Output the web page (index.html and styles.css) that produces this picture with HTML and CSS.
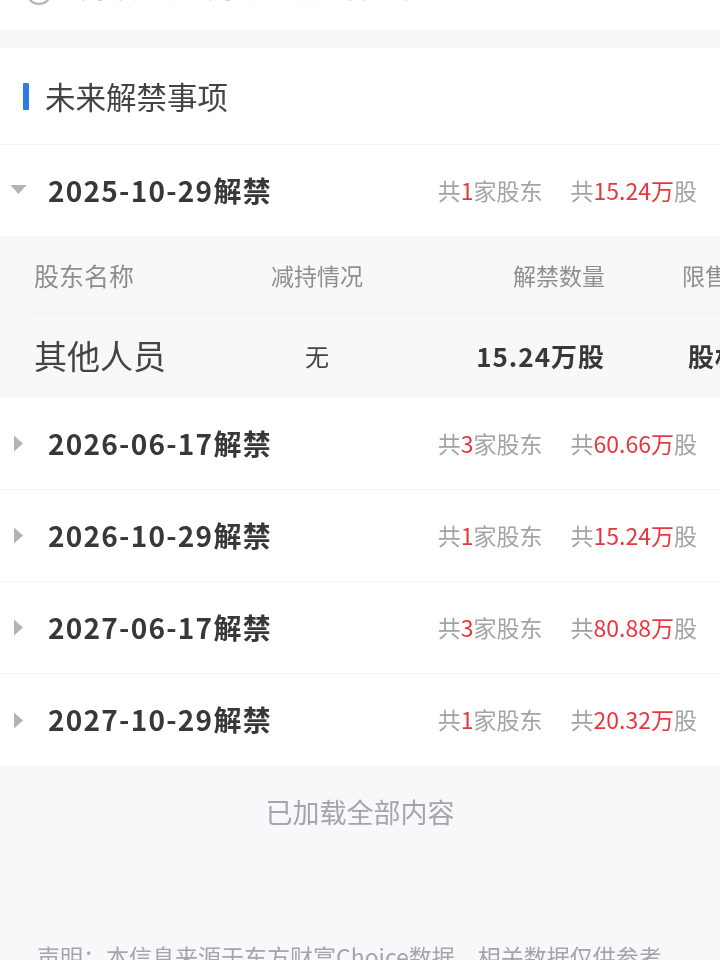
FILE: index.html
```html
<!DOCTYPE html>
<html lang="zh-CN">
<head>
    <meta charset="UTF-8">
    <meta name="viewport" content="width=device-width, initial-scale=1.0">
    <title>未来解禁事项</title>
    <link rel="stylesheet" href="styles.css">
</head>
<body>
    <div class="page">
        <div class="top-note">
            <span class="info-icon"></span>
            <span class="top-note-text">解禁日期及解禁数量以公告为准</span>
        </div>

        <section class="unlock">
            <h2 class="section-title">未来解禁事项</h2>

            <div class="unlock-row">
                <svg class="caret-down" viewBox="0 0 18 10"><path d="M0 0H18L9 10Z"/></svg>
                <span class="unlock-date">2025-10-29解禁</span>
                <span class="unlock-meta">共<em>1</em>家股东</span>
                <span class="unlock-meta">共<em>15.24万</em>股</span>
            </div>
            <div class="holders">
                <div class="holders-head">
                    <span class="col-name">股东名称</span>
                    <span class="col-reduce">减持情况</span>
                    <span class="col-amount">解禁数量</span>
                    <span class="col-type">限售股类型</span>
                </div>
                <div class="holders-item">
                    <span class="col-name">其他人员</span>
                    <span class="col-reduce">无</span>
                    <span class="col-amount">15.24万股</span>
                    <span class="col-type">股权激励限售</span>
                </div>
            </div>

            <div class="unlock-row">
                <svg class="caret-right" viewBox="0 0 10 18"><path d="M0 0L10 9L0 18Z"/></svg>
                <span class="unlock-date">2026-06-17解禁</span>
                <span class="unlock-meta">共<em>3</em>家股东</span>
                <span class="unlock-meta">共<em>60.66万</em>股</span>
            </div>
            <div class="unlock-row">
                <svg class="caret-right" viewBox="0 0 10 18"><path d="M0 0L10 9L0 18Z"/></svg>
                <span class="unlock-date">2026-10-29解禁</span>
                <span class="unlock-meta">共<em>1</em>家股东</span>
                <span class="unlock-meta">共<em>15.24万</em>股</span>
            </div>
            <div class="unlock-row">
                <svg class="caret-right" viewBox="0 0 10 18"><path d="M0 0L10 9L0 18Z"/></svg>
                <span class="unlock-date">2027-06-17解禁</span>
                <span class="unlock-meta">共<em>3</em>家股东</span>
                <span class="unlock-meta">共<em>80.88万</em>股</span>
            </div>
            <div class="unlock-row">
                <svg class="caret-right" viewBox="0 0 10 18"><path d="M0 0L10 9L0 18Z"/></svg>
                <span class="unlock-date">2027-10-29解禁</span>
                <span class="unlock-meta">共<em>1</em>家股东</span>
                <span class="unlock-meta">共<em>20.32万</em>股</span>
            </div>
        </section>

        <p class="load-end">已加载全部内容</p>
        <p class="disclaimer">声明：本信息来源于东方财富Choice数据，相关数据仅供参考</p>
    </div>
</body>
</html>
```

FILE: styles.css
```css
* {
    margin: 0;
    padding: 0;
    box-sizing: border-box;
}

html, body {
    height: 960px;
    overflow: hidden;
}

body {
    background-color: #f7f8fa;
    color: #333;
    font-family: "Noto Sans CJK SC", "Noto Sans", sans-serif;
}

/* the source picture is a soft, upscaled capture */
.page {
    height: 960px;
    overflow: hidden;
    filter: blur(0.45px);
}

.top-note {
    height: 30px;
    background-color: #fff;
    padding-left: 26px;
    display: flex;
    align-items: flex-end;
    gap: 12px;
    overflow: hidden;
    color: #c4c4c4;
    font-size: 25.5px;
    line-height: 34px;
}

.top-note-text {
    flex: none;
    margin-bottom: 26px;
}

.info-icon {
    flex: none;
    width: 26px;
    height: 26px;
    margin-bottom: 25px;
    border: 2px solid #b5b5b5;
    border-radius: 50%;
}

.unlock {
    margin-top: 18px;
    background-color: #fff;
}

.section-title {
    height: 97px;
    padding-left: 23px;
    display: flex;
    align-items: center;
    gap: 16px;
    border-bottom: 1px solid #f3f4f6;
    color: #444;
    font-size: 30.5px;
    font-weight: 400;
}

.section-title::before {
    content: "";
    width: 6px;
    height: 27px;
    border-radius: 1px;
    background-color: #2f7be5;
}

.unlock-row {
    height: 92px;
    padding: 0 23px 2px 10px;
    display: flex;
    align-items: center;
    color: #a3a3a3;
    font-size: 23px;
    border-bottom: 1px solid #f3f4f6;
}

.unlock-row:last-child {
    border-bottom: none;
}

.unlock-row em {
    font-style: normal;
    color: #e8363f;
}

.unlock-date {
    margin-right: auto;
    color: #383838;
    font-size: 28px;
    font-weight: 700;
    letter-spacing: 1.25px;
}

.unlock-meta + .unlock-meta {
    margin-left: 28px;
}

.caret-down {
    flex: none;
    width: 17px;
    height: 9px;
    margin-right: 21px;
    fill: #b3b3b3;
}

.caret-right {
    flex: none;
    width: 9px;
    height: 17px;
    margin: 2px 25px 0 4px;
    fill: #b3b3b3;
}

.holders {
    padding-left: 32px;
    background-color: #f7f8fa;
    overflow: hidden;
}

.holders-head,
.holders-item {
    display: grid;
    grid-template-columns: 192px 186px 195px 1fr;
    align-items: center;
    white-space: nowrap;
}

.holders-head {
    height: 77px;
    border-bottom: 1px solid #f0f1f3;
    color: #8e8e8e;
    font-size: 23px;
}

.holders-head .col-name {
    padding-left: 2px;
    font-size: 25px;
}

.holders-item {
    height: 84px;
    padding-bottom: 2px;
    color: #444;
}

.holders-item .col-name {
    padding-left: 2px;
    font-size: 33px;
}

.holders-item .col-reduce {
    font-size: 24px;
}

.holders-item .col-amount,
.holders-item .col-type {
    color: #383838;
    font-size: 26px;
    font-weight: 700;
    letter-spacing: 1px;
}

.col-reduce {
    text-align: center;
}

.col-amount {
    text-align: right;
}

.col-type {
    padding-left: 77px;
}

.holders-item .col-type {
    padding-left: 83px;
}

.load-end {
    padding-top: 26px;
    text-align: center;
    color: #a3a5a8;
    font-size: 27px;
    line-height: 40px;
}

.disclaimer {
    margin-top: 107px;
    padding-left: 37px;
    white-space: nowrap;
    color: #a3a5a8;
    font-size: 23px;
    line-height: 34px;
}
```
